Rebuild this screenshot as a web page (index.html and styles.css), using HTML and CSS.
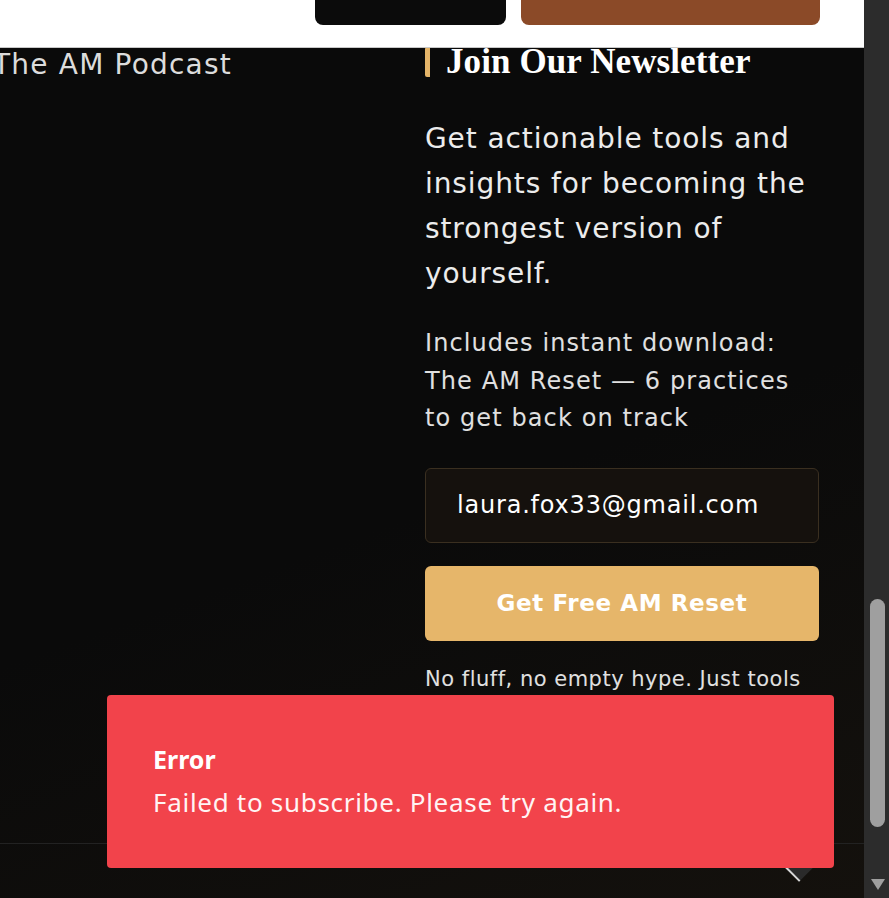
FILE: index.html
```html
<!DOCTYPE html>
<html lang="en">
<head>
<meta charset="utf-8">
<title>Join Our Newsletter</title>
<link rel="stylesheet" href="styles.css">
</head>
<body>
<div class="window">
  <div class="page">
    <header class="topbar">
      <div class="topbar-actions">
        <a class="btn-dark" href="#" aria-label="Listen"></a>
        <a class="btn-brown" href="#" aria-label="Book a Session"></a>
      </div>
    </header>
    <section class="footer">
      <div class="footer-grid">
        <div class="col-links">
          <a class="footer-link" href="#">The AM Podcast</a>
        </div>
        <div class="col-news">
          <h2 class="news-title">Join Our Newsletter</h2>
          <p class="news-lead">Get actionable tools and insights for becoming the strongest version of yourself.</p>
          <p class="news-sub">Includes instant download: The AM Reset — 6 practices to get back on track</p>
          <form class="news-form">
            <input class="news-input" type="email" value="laura.fox33@gmail.com">
            <button class="news-btn" type="button">Get Free AM Reset</button>
          </form>
          <p class="news-note">No fluff, no empty hype. Just tools that work.</p>
        </div>
      </div>
      <div class="footer-bottom"></div>
    </section>
  </div>
  <div class="scrollbar">
    <div class="scroll-track">
      <div class="scroll-thumb"></div>
    </div>
    <div class="scroll-arrow"></div>
  </div>
  <a class="to-top" href="#" aria-label="Back to top"></a>
  <div class="toast" role="alert">
    <div class="toast-title">Error</div>
    <div class="toast-msg">Failed to subscribe. Please try again.</div>
  </div>
</div>
</body>
</html>
```
FILE: styles.css
```css
* { box-sizing: border-box; }
html, body { margin: 0; padding: 0; }
body {
  width: 889px;
  height: 898px;
  overflow: hidden;
  background: #0a0a0a;
  font-family: "DejaVu Sans", sans-serif;
}
.window {
  position: relative;
  display: flex;
  width: 889px;
  height: 898px;
}
.page {
  width: 864px;
  height: 898px;
  overflow: hidden;
  display: flex;
  flex-direction: column;
  background: linear-gradient(160deg, #0a0a0a 55%, #14110d 100%);
}
.topbar {
  height: 48px;
  flex: none;
  background: #fff;
  border-bottom: 1px solid #c8c8c8;
  position: relative;
  z-index: 2;
}
.topbar-actions {
  display: flex;
  gap: 15px;
  margin-left: 315px;
  margin-top: -20px;
}
.btn-dark, .btn-brown {
  display: block;
  height: 45px;
  border-radius: 8px;
}
.btn-dark {
  width: 191px;
  background: #0b0b0b;
}
.btn-brown {
  width: 299px;
  background: #8b4a28;
}
.footer {
  flex: 1;
  display: flex;
  flex-direction: column;
  margin-top: -9px;
}
.footer-grid {
  display: grid;
  grid-template-columns: 428px 394px;
  margin-left: -3px;
  height: 804px;
}
.footer-link {
  display: block;
  color: #dcdcdc;
  text-decoration: none;
  font-size: 28px;
  line-height: 40px;
  letter-spacing: 1.2px;
  margin-top: 6px;
  margin-left: -4px;
}
.col-news {
  display: flex;
  flex-direction: column;
}
.news-title {
  margin: 0;
  padding-left: 16px;
  border-left: 5px solid #e4b468;
  border-radius: 2px;
  font-family: "Liberation Serif", serif;
  font-weight: 700;
  font-size: 35px;
  line-height: 30px;
  color: #fff;
  margin-top: 8px;
  letter-spacing: 0.1px;
}
.news-lead {
  margin: 39px 0 0;
  font-size: 28px;
  line-height: 45px;
  letter-spacing: 0.9px;
  color: #ececec;
}
.news-sub {
  margin: 29px 0 0;
  font-size: 24px;
  line-height: 37.5px;
  letter-spacing: 1.1px;
  color: #e0e0e0;
}
.news-form {
  display: flex;
  flex-direction: column;
  gap: 23px;
  margin-top: 30px;
}
.news-input {
  height: 75px;
  width: 100%;
  background: #15110d;
  border: 1px solid #3a2f20;
  border-radius: 6px;
  padding: 0 0 0 31px;
  font-family: "DejaVu Sans", sans-serif;
  font-size: 24px;
  letter-spacing: 0.8px;
  color: #fff;
  outline: none;
}
.news-btn {
  height: 75px;
  width: 100%;
  background: #e6b66a;
  border: none;
  border-radius: 6px;
  font-family: "DejaVu Sans", sans-serif;
  font-weight: 700;
  font-size: 23px;
  letter-spacing: 0.6px;
  color: #fff;
}
.news-note {
  margin: 22px 0 0;
  font-size: 21px;
  line-height: 32px;
  letter-spacing: 0.5px;
  color: #e0e0e0;
}
.footer-bottom {
  border-top: 1px solid #222;
  height: 60px;
}
.scrollbar {
  width: 25px;
  height: 898px;
  flex: none;
  background: #2c2c2c;
  display: flex;
  flex-direction: column;
  padding: 0 4px 0 6px;
}
.scroll-track {
  flex: 1;
  padding-top: 599px;
}
.scroll-thumb {
  width: 15px;
  height: 228px;
  border-radius: 8px;
  background: #9f9f9f;
}
.scroll-arrow {
  width: 0;
  height: 0;
  margin: 0 0 8px 1px;
  border-left: 7px solid transparent;
  border-right: 7px solid transparent;
  border-top: 11px solid #9f9f9f;
}
.to-top {
  position: absolute;
  left: 785px;
  top: 848px;
  width: 28px;
  height: 28px;
  background: #2a2a2a;
  border-left: 2px solid #d8d8d8;
  transform: rotate(-45deg);
}
.toast {
  position: absolute;
  left: 107px;
  top: 695px;
  width: 727px;
  height: 173px;
  background: #f2434b;
  border-radius: 4px;
  padding: 48px 46px;
  font-family: "Noto Sans", sans-serif;
  color: #fff;
  z-index: 5;
}
.toast-title {
  font-weight: 700;
  font-size: 25px;
  line-height: 32px;
}
.toast-msg {
  margin-top: 11px;
  font-size: 26px;
  line-height: 32px;
  letter-spacing: 0.7px;
  color: #fff4f4;
}
```
